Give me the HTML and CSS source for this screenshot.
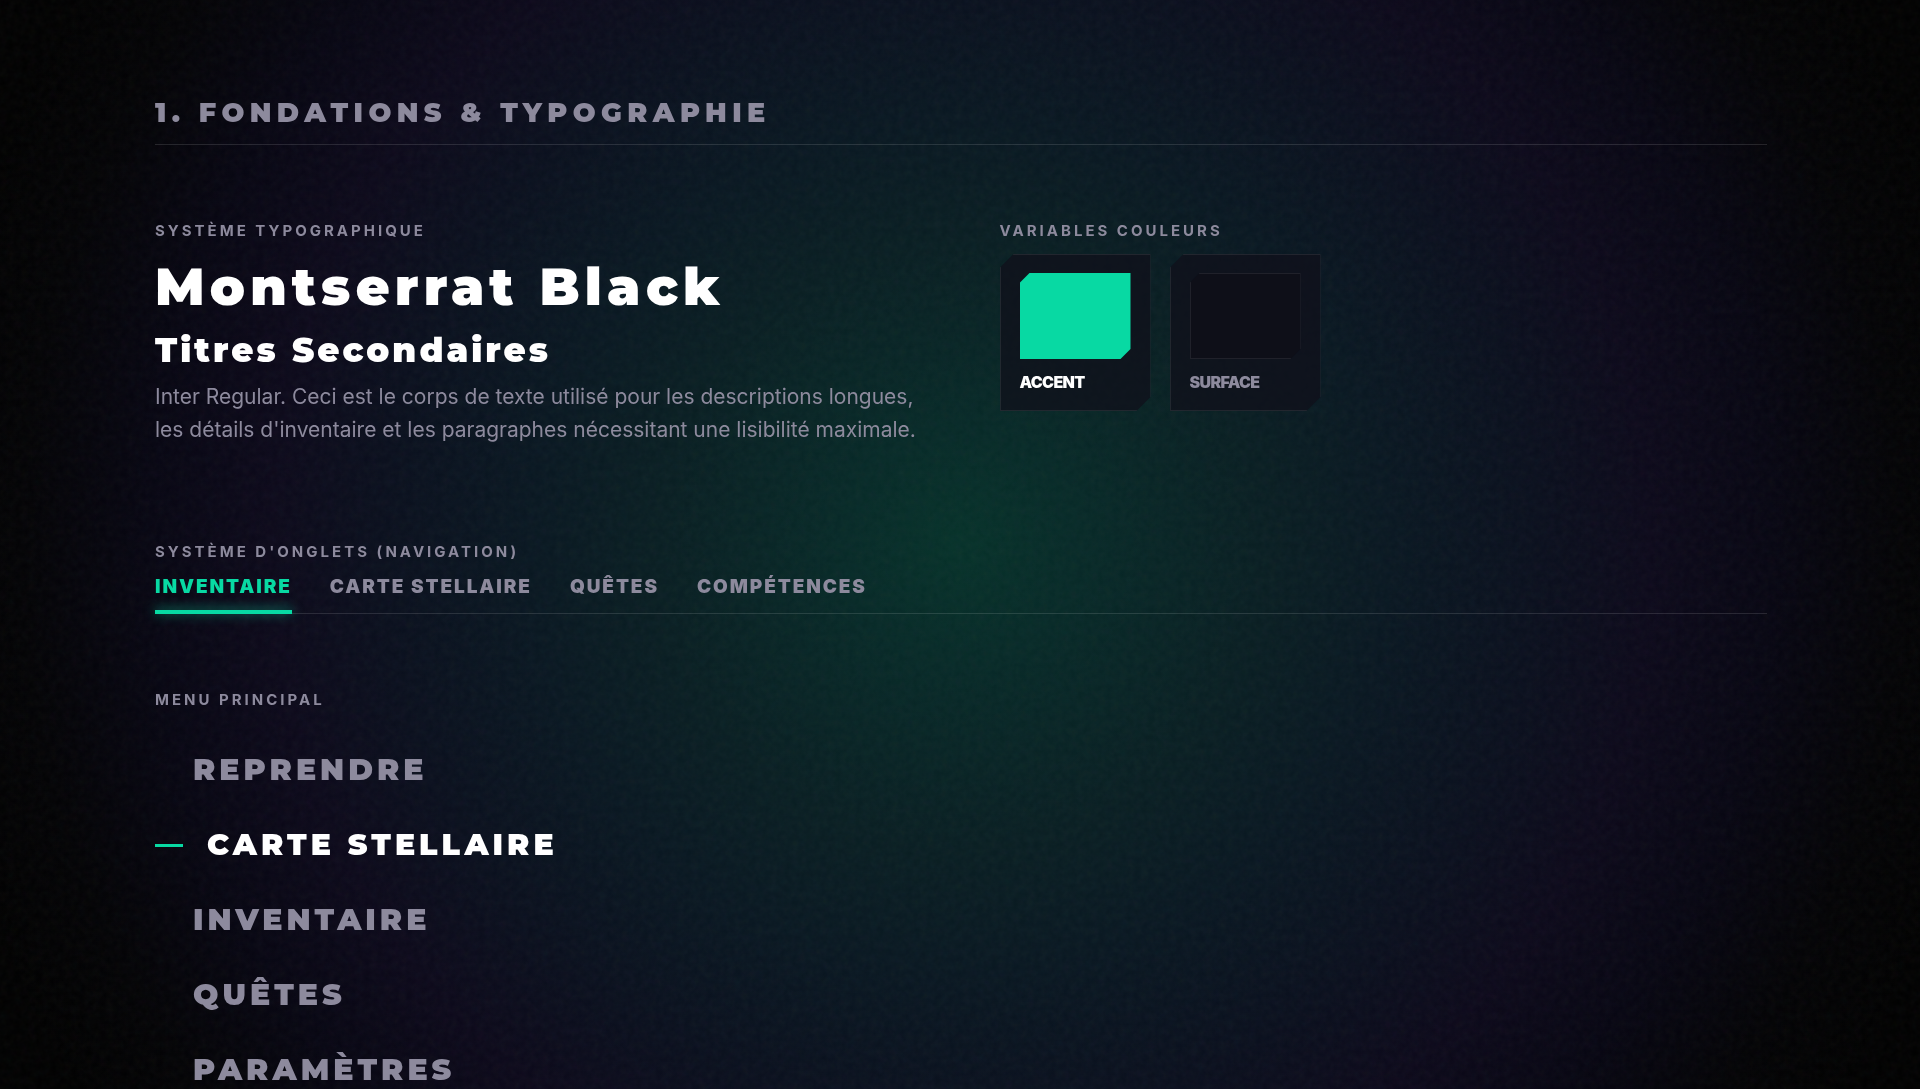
FILE: index.html
```html
<!DOCTYPE html>
<html lang="fr">
<head>
<meta charset="utf-8">
<meta name="viewport" content="width=device-width, initial-scale=1">
<title>Fondations &amp; Typographie</title>
<link rel="stylesheet" href="styles.css">
</head>
<body>
<svg class="grain" aria-hidden="true"><filter id="noise"><feTurbulence type="fractalNoise" baseFrequency="0.14" numOctaves="3" stitchTiles="stitch"/></filter><rect width="100%" height="100%" filter="url(#noise)"/></svg>
<main class="page">
  <h2 class="section-title">1. Fondations &amp; Typographie</h2>
  <div class="foundations">
    <section>
      <p class="label">Système typographique</p>
      <h1 class="title">Montserrat Black</h1>
      <h3 class="subtitle">Titres Secondaires</h3>
      <p class="copy">Inter Regular. Ceci est le corps de texte utilisé pour les descriptions longues, les détails d'inventaire et les paragraphes nécessitant une lisibilité maximale.</p>
    </section>
    <section>
      <p class="label">Variables couleurs</p>
      <div class="cards">
        <div class="card"><div class="swatch swatch-accent"></div><p class="card-name card-name-accent">ACCENT</p></div>
        <div class="card"><div class="swatch swatch-surface"></div><p class="card-name">SURFACE</p></div>
      </div>
    </section>
  </div>
  <section class="tabs-section">
    <p class="label">Système d'onglets (navigation)</p>
    <div class="tabs" role="tablist">
      <button class="tab active" role="tab" aria-selected="true">Inventaire</button>
      <button class="tab" role="tab">Carte stellaire</button>
      <button class="tab" role="tab">Quêtes</button>
      <button class="tab" role="tab">Compétences</button>
    </div>
  </section>
  <section>
    <p class="label">Menu principal</p>
    <nav class="menu">
      <button class="item">Reprendre</button>
      <button class="item active">Carte stellaire</button>
      <button class="item">Inventaire</button>
      <button class="item">Quêtes</button>
      <button class="item">Paramètres</button>
    </nav>
  </section>
</main>
</body>
</html>
```
FILE: styles.css
```css
:root {
  --accent: #08d9a3;
  --muted: #8d8a9d;
  --line: rgba(255, 255, 255, 0.12);
  --display: "Montserrat", "Inter", sans-serif;
}
* { box-sizing: border-box; margin: 0; padding: 0; }
body {
  min-height: 100vh;
  color: #fff;
  font-family: "Inter", sans-serif;
  background:
    radial-gradient(circle at 50% 50%, #07322a 0, #082a28 120px, #0a1f23 300px, #0a1822 430px, #0b101e 580px, #0d0a1b 690px, #080713 810px, #040406 940px, #020202 1040px) #020202;
}
button { background: none; border: 0; font: inherit; color: inherit; cursor: pointer; }
.grain { position: fixed; inset: 0; width: 100%; height: 100%; opacity: 0.04; pointer-events: none; }
.page { padding: 96px 153px 0 155px; position: relative; }
.section-title {
  padding-bottom: 14px;
  border-bottom: 1px solid var(--line);
  font: 900 27px/34px var(--display);
  letter-spacing: 0.2em;
  text-transform: uppercase;
  color: var(--muted);
}
.foundations { display: grid; grid-template-columns: 1fr 1fr; gap: 77px; padding-top: 76px; }
.label {
  font-size: 15px;
  font-weight: 700;
  line-height: 20px;
  letter-spacing: 3px;
  text-transform: uppercase;
  color: var(--muted);
}
.title { margin-top: 14px; font: 900 52px/64px var(--display); letter-spacing: 0.1em; }
.subtitle { margin-top: 13px; font: 900 34px/36px var(--display); letter-spacing: 3px; }
.copy { margin-top: 12px; font-size: 21px; line-height: 33px; color: var(--muted); }
.cards { display: flex; gap: 19px; margin-top: 13px; }
.card {
  width: 151px;
  padding: 18px 19px;
  border: 1px solid rgba(255, 255, 255, 0.08);
  background: rgba(16, 16, 27, 0.75);
  clip-path: polygon(14px 0, 100% 0, 100% calc(100% - 14px), calc(100% - 14px) 100%, 0 100%, 0 14px);
}
.swatch {
  height: 86px;
  clip-path: polygon(10px 0, 100% 0, 100% calc(100% - 10px), calc(100% - 10px) 100%, 0 100%, 0 10px);
}
.swatch-accent { background: var(--accent); }
.swatch-surface { background: #0e0f18; border: 1px solid rgba(255, 255, 255, 0.08); }
.card-name { margin-top: 13px; font-size: 16px; font-weight: 900; line-height: 20px; letter-spacing: -0.04em; color: var(--muted); }
.card-name-accent { color: #fff; }
.tabs-section { margin: 96px 0 76px; }
.tabs { display: flex; gap: 38px; margin-top: 13px; border-bottom: 1px solid var(--line); }
.tab { margin-bottom: -1px; padding-bottom: 11px; border-bottom: 4px solid transparent; font-size: 19px; font-weight: 900; line-height: 24px; letter-spacing: 0.1em; text-transform: uppercase; color: var(--muted); }
.tab.active { position: relative; color: var(--accent); }
.tab.active::after { content: ""; position: absolute; inset: auto 0 -4px; height: 4px; background: var(--accent); box-shadow: 0 -1px 12px rgba(8, 217, 163, 0.7); }
.menu { display: flex; flex-direction: column; align-items: flex-start; gap: 39px; margin-top: 42px; }
.item { display: flex; align-items: center; gap: 24px; padding-left: 38px; font: 900 30px/36px var(--display); letter-spacing: 4px; text-transform: uppercase; color: var(--muted); }
.item.active { padding-left: 0; color: #fff; }
.item.active::before { content: ""; width: 28px; height: 3px; background: var(--accent); }
```
